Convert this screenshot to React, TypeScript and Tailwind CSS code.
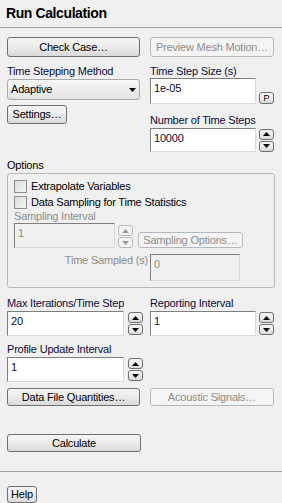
import React from "react";

const btnOn =
  "border-[#707070] bg-linear-to-b from-[#f5f5f5] via-[#ececec] to-[#d9d9d9] text-black";
const btnOff = "border-[#b5b9bc] bg-[#f4f4f4] text-[#8d8d8d]";

const Btn = ({
  children,
  disabled,
  className = "",
}: {
  children?: React.ReactNode;
  disabled?: boolean;
  className?: string;
}) => (
  <div
    className={`flex items-center justify-center rounded-[3px] border ${disabled ? btnOff : btnOn} ${className}`}
  >
    {children}
  </div>
);

const Tri = ({ up, grey }: { up?: boolean; grey?: boolean }) => (
  <svg width="7" height="4" viewBox="0 0 7 4">
    <polygon
      points={up ? "0,4 7,4 3.5,0" : "0,0 7,0 3.5,4"}
      fill={grey ? "#9a9a9a" : "#000"}
    />
  </svg>
);

const Spin = ({ disabled }: { disabled?: boolean }) => (
  <div className="flex flex-col gap-[1px]">
    <Btn disabled={disabled} className="w-[15px] h-[11px] rounded-[2px]">
      <Tri up grey={disabled} />
    </Btn>
    <Btn disabled={disabled} className="w-[15px] h-[11px] rounded-[2px]">
      <Tri grey={disabled} />
    </Btn>
  </div>
);

const Field = ({
  value,
  className = "",
  disabled,
}: {
  value: string;
  className?: string;
  disabled?: boolean;
}) => (
  <div
    className={`px-[3px] pt-[3px] border border-t-[#7f7f7f] border-l-[#7f7f7f] border-r-[#d9d9d9] border-b-[#d9d9d9] leading-[13px] ${disabled ? "bg-[#f0f0f0] text-[#8d8d8d]" : "bg-white text-[#0b0b3b]"} ${className}`}
  >
    {value}
  </div>
);

const Label = ({ children, grey }: { children: React.ReactNode; grey?: boolean }) => (
  <div className={`h-[13px] leading-[13px] whitespace-nowrap ${grey ? "text-[#8d8d8d]" : "text-[#0b0b3b]"}`}>
    {children}
  </div>
);

const Check = ({ label }: { label: string }) => (
  <div className="flex items-center h-[16px] gap-[4px]">
    <div className="w-[13px] h-[13px] border border-[#8e8f8f] bg-linear-to-br from-[#dcdcdc] to-[#f6f6f6]" />
    <span className="text-black">{label}</span>
  </div>
);

export default function App() {
  return (
    <div className="w-[282px] h-[503px] overflow-hidden bg-[#f0f0f0] text-[11px] tracking-[-0.2px] font-['Liberation_Sans',Arial,sans-serif] text-black">
      <div className="h-[28px] border-b border-[#a0a0a0] px-[6px] pt-[5px] text-[14px] leading-[17px] font-bold tracking-[-0.4px]">
        Run Calculation
      </div>

      <div className="px-[7px] pt-[9px]">
        <div className="flex gap-[10px]">
          <Btn className="w-[133px] h-[20px]">Check Case…</Btn>
          <Btn disabled className="w-[124px] h-[20px]">
            Preview Mesh Motion…
          </Btn>
        </div>

        <div className="flex mt-[8px]">
          <div className="w-[143px]">
            <Label>Time Stepping Method</Label>
            <div className="mt-[1px] w-[133px] h-[21px] rounded-[3px] border border-[#a9a9a9] bg-linear-to-b from-[#f6f6f6] to-[#e3e3e3] flex items-center justify-between pl-[3px] pr-[3px]">
              <span>Adaptive</span>
              <Tri />
            </div>
            <Btn className="mt-[5px] w-[60px] h-[19px]">Settings…</Btn>
          </div>
          <div className="w-[124px]">
            <Label>Time Step Size (s)</Label>
            <div className="flex items-end gap-[3px]">
              <Field value="1e-05" className="w-[106px] h-[26px]" />
              <Btn className="w-[15px] h-[12px] rounded-[2px] text-[9px] leading-none">P</Btn>
            </div>
            <div className="mt-[10px]">
              <Label>Number of Time Steps</Label>
            </div>
            <div className="flex items-center gap-[3px] mt-[1px]">
              <Field value="10000" className="w-[106px] h-[24px]" />
              <Spin />
            </div>
          </div>
        </div>

        <div className="mt-[6px] h-[15px] leading-[14px]">Options</div>
        <div className="h-[115px] rounded-[3px] border border-[#b9b9b9] pl-[6px] pt-[4px]">
          <Check label="Extrapolate Variables" />
          <Check label="Data Sampling for Time Statistics" />
          <div className="mt-[0px]">
            <Label grey>Sampling Interval</Label>
          </div>
          <div className="flex items-end">
            <Field value="1" disabled className="w-[101px] h-[25px]" />
            <div className="ml-[3px]">
              <Spin disabled />
            </div>
            <Btn disabled className="ml-[5px] w-[105px] h-[16px]">
              Sampling Options…
            </Btn>
          </div>
          <div className="flex mt-[6px]">
            <div className="w-[136px] text-right text-[#8d8d8d] leading-[12px] pr-[2px]">Time Sampled (s)</div>
            <Field value="0" disabled className="w-[90px] h-[27px]" />
          </div>
        </div>

        <div className="flex mt-[9px]">
          <div className="w-[143px]">
            <Label>Max Iterations/Time Step</Label>
            <div className="flex items-center gap-[4px] mt-[1px]">
              <Field value="20" className="w-[117px] h-[25px]" />
              <Spin />
            </div>
          </div>
          <div className="w-[124px]">
            <Label>Reporting Interval</Label>
            <div className="flex items-center gap-[3px] mt-[1px]">
              <Field value="1" className="w-[106px] h-[25px]" />
              <Spin />
            </div>
          </div>
        </div>

        <div className="mt-[7px]">
          <Label>Profile Update Interval</Label>
          <div className="flex items-center gap-[4px] mt-[1px]">
            <Field value="1" className="w-[117px] h-[25px]" />
            <Spin />
          </div>
        </div>

        <div className="flex gap-[10px] mt-[6px]">
          <Btn className="w-[133px] h-[18px]">Data File Quantities…</Btn>
          <Btn disabled className="w-[124px] h-[18px]">
            Acoustic Signals…
          </Btn>
        </div>

        <Btn className="mt-[28px] w-[134px] h-[18px]">Calculate</Btn>
      </div>

      <div className="mt-[19px] border-t border-[#a0a0a0]" />
      <div className="px-[7px] pt-[14px]">
        <Btn className="w-[30px] h-[17px]">Help</Btn>
      </div>
    </div>
  );
}
